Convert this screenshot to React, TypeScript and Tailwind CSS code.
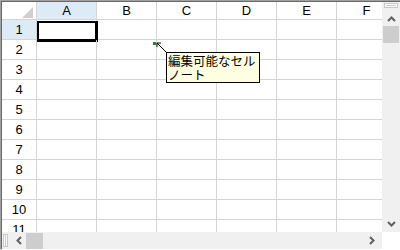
import React from "react";

const COLS = ["A", "B", "C", "D", "E", "F"];
const ROWS = [1, 2, 3, 4, 5, 6, 7, 8, 9, 10, 11];

function Chevron({ dir }: { dir: "up" | "down" | "left" | "right" }) {
  // small grey arrow used on the scrollbars
  const pts = {
    up: "1,6 4.5,2.5 8,6",
    down: "1,3 4.5,6.5 8,3",
    left: "6,1 2.5,4.5 6,8",
    right: "3,1 6.5,4.5 3,8",
  }[dir];
  return (
    <svg width="9" height="9" viewBox="0 0 9 9">
      <polyline points={pts} fill="none" stroke="#606060" strokeWidth="2" />
    </svg>
  );
}

export default function App() {
  return (
    <div className="w-[400px] h-[250px] bg-white border-t border-l border-b border-[#a0a0a0] border-b-white font-['Liberation_Sans',sans-serif] text-black overflow-hidden">
      <div className="h-full flex flex-col border-t border-l border-[#696969]">
        {/* Sheet + vertical scrollbar */}
        <div className="flex h-[230px]">
          <div className="relative w-[380px] overflow-hidden">
            {/* Column headers */}
            <div className="flex h-[18px] border-b border-[#d4d4d4]">
              <div className="relative w-[35px] shrink-0 border-r border-[#d4d4d4]">
                <svg className="absolute left-[20px] top-[5px]" width="11" height="11" viewBox="0 0 11 11">
                  <polygon points="11,0 11,11 0,11" fill="#cfcfcf" />
                </svg>
              </div>
              {COLS.map((c) => (
                <div
                  key={c}
                  className={`w-[60px] shrink-0 border-r border-[#d4d4d4] flex items-center justify-center text-[13px] ${
                    c === "A" ? "bg-[#ddebf7]" : "bg-white"
                  }`}
                >
                  {c}
                </div>
              ))}
            </div>

            {/* Rows */}
            {ROWS.map((r) => (
              <div key={r} className="flex h-[20px] border-b border-[#d4d4d4]">
                <div
                  className={`w-[35px] shrink-0 border-r border-[#d4d4d4] flex items-center justify-center text-[13px] ${
                    r === 1 ? "bg-[#ddebf7]" : "bg-white"
                  }`}
                >
                  {r}
                </div>
                {COLS.map((c) => (
                  <div key={c} className="relative w-[60px] shrink-0 border-r border-[#d4d4d4]">
                    {r === 1 && c === "A" && (
                      <div className="absolute left-0 top-px w-[61px] h-[21px] border-2 border-r-[3px] border-b-[3px] border-black" />
                    )}
                  </div>
                ))}
              </div>
            ))}

            {/* Note on B2 */}
            <div className="absolute left-[151px] top-[40px] w-[3px] h-[3px] bg-[#1e8c1e]" />
            <svg className="absolute left-[154px] top-[40px]" width="12" height="12" viewBox="0 0 12 12">
              <line x1="1" y1="1" x2="11" y2="11" stroke="black" strokeWidth="1" />
              <polyline points="1,5 1,1 5,1" fill="none" stroke="black" strokeWidth="1" />
            </svg>
            <div className="absolute left-[164px] top-[50px] w-[94px] h-[31px] bg-[#ffffe1] border border-black pl-px pt-px whitespace-nowrap text-[12.5px] leading-[14px] font-['Noto_Sans_CJK_JP',sans-serif]">
              <div>編集可能なセル</div>
              <div>ノート</div>
            </div>
          </div>

          {/* Vertical scrollbar */}
          <div className="w-[18px] bg-[#f0f0f0] flex flex-col items-center">
            <div className="mt-px w-[14px] h-[5px] bg-white border border-[#c8c8c8] flex items-center justify-center">
              <div className="w-[10px] h-px bg-[#c8c8c8]" />
            </div>
            <div className="mt-[6px] h-[10px] flex items-center">
              <Chevron dir="up" />
            </div>
            <div className="mt-[2px] w-[16px] h-[17px] bg-[#cdcdcd]" />
            <div className="flex-1" />
            <div className="mb-[4px] h-[10px] flex items-center">
              <Chevron dir="down" />
            </div>
          </div>
        </div>

        {/* Horizontal scrollbar */}
        <div className="flex h-[17px]">
          <div className="w-[380px] bg-[#f0f0f0] flex items-center">
            <div className="ml-px w-[5px] h-[13px] bg-white border border-[#c8c8c8] flex justify-center">
              <div className="w-px h-full bg-[#c8c8c8]" />
            </div>
            <div className="ml-[6px] w-[10px] flex justify-center">
              <Chevron dir="left" />
            </div>
            <div className="ml-[2px] w-[17px] h-[16px] bg-[#cdcdcd]" />
            <div className="flex-1" />
            <div className="mr-[6px] w-[10px] flex justify-center">
              <Chevron dir="right" />
            </div>
          </div>
          <div className="w-[18px] bg-white" />
        </div>
      </div>
    </div>
  );
}
